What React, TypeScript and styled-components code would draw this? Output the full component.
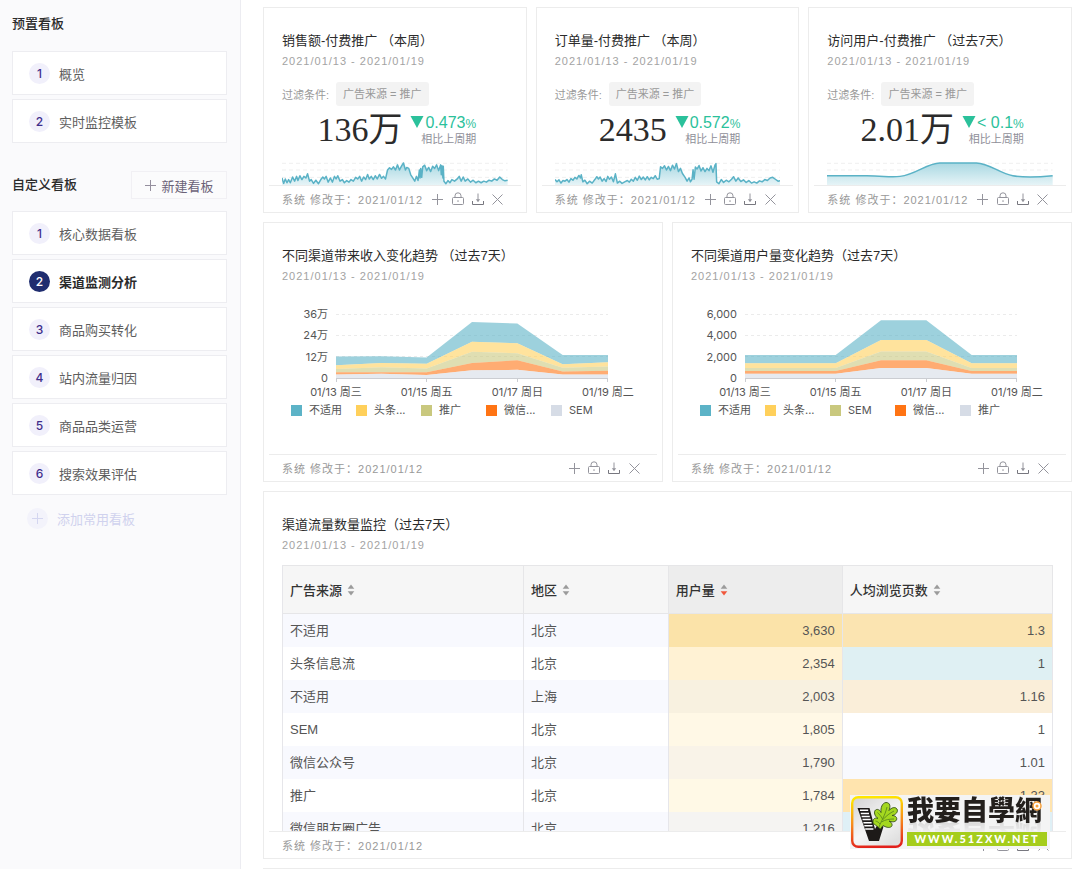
import React from "react";
import styled, { createGlobalStyle, css } from "styled-components";

const SANS = `"Liberation Sans", "Noto Sans CJK SC", sans-serif`;
const CHART = `Inter, "Noto Sans CJK SC", sans-serif`;

const GlobalStyle = createGlobalStyle`
  *, *::before, *::after { box-sizing: border-box; }
  body { margin: 0; background: #fff; color: #333; font-family: ${SANS}; font-size: 13px; }
  button { font: inherit; color: inherit; border: 0; background: none; padding: 0; cursor: pointer; }
  ul, ol { list-style: none; margin: 0; padding: 0; }
  h1, h2, h3, p { margin: 0; font-size: inherit; font-weight: inherit; }
`;

/* ---------- page ---------- */

const Page = styled.div`
  display: flex;
  height: 100vh;
`;

const Sidebar = styled.nav`
  flex: 0 0 241px;
  padding: 14px 13px 0 12px;
  background: #fafafc;
  border-right: 1px solid #ececf1;
`;

const Main = styled.main`
  flex: 1;
  min-width: 0;
  padding: 7px 8px 0 22px;
  overflow-y: auto;
  scrollbar-width: none;
  display: flex;
  flex-direction: column;
  gap: 9px;
`;

/* ---------- sidebar ---------- */

const SideHeading = styled.h2`
  line-height: 20px;
  font-weight: 500;
  color: #2b2b2b;
`;

const SideHeader = styled.div<{ $spaced?: boolean }>`
  display: flex;
  align-items: center;
  justify-content: space-between;
  margin: ${(p) => (p.$spaced ? "28px 0 12px" : "0 0 17px")};
`;

const NewButton = styled.button`
  display: flex;
  align-items: center;
  justify-content: center;
  gap: 4px;
  width: 96px;
  height: 28px;
  background: #fbfbfc;
  border: 1px solid #f1f0f4;
  color: #6b6278;
  svg { color: #958f9e; }
`;

const BoardList = styled.ol`
  display: grid;
  gap: 4px;
`;

const Bullet = styled.span<{ $active?: boolean; $faint?: boolean }>`
  display: flex;
  align-items: center;
  justify-content: center;
  width: 21px;
  height: 21px;
  border-radius: 50%;
  background: ${(p) => (p.$active ? "#1f2d6f" : p.$faint ? "#f3f3fb" : "#f1f0fb")};
  color: ${(p) => (p.$active ? "#fff" : p.$faint ? "#d4d6f0" : "#3f2d8c")};
  font-family: ${CHART};
  font-size: 12px;
  font-weight: 500;
`;

const BoardButton = styled.button<{ $active?: boolean }>`
  display: flex;
  align-items: center;
  gap: 9px;
  width: 100%;
  height: 44px;
  padding-left: 16px;
  background: #fff;
  border: 1px solid #ededf1;
  color: ${(p) => (p.$active ? "#2b2b2b" : "#5e5e5e")};
  font-weight: ${(p) => (p.$active ? 700 : 400)};
`;

const AddButton = styled.button`
  display: flex;
  align-items: center;
  gap: 9px;
  height: 44px;
  margin-top: 1px;
  padding-left: 15px;
  color: #d0d2ee;
`;

/* ---------- cards ---------- */

const Row = styled.div<{ $columns: number }>`
  flex: none;
  display: grid;
  grid-template-columns: repeat(${(p) => p.$columns}, minmax(0, 1fr));
  gap: 9px;
`;

const CardBox = styled.section<{ $height: number }>`
  display: flex;
  flex-direction: column;
  height: ${(p) => p.$height}px;
  border: 1px solid #ececec;
  background: #fff;
`;

const CardBody = styled.div`
  flex: 1;
  min-height: 0;
  overflow: hidden;
  display: flex;
  flex-direction: column;
  padding: 23px 18px 0;
`;

const CardTitle = styled.h3`
  line-height: 20px;
  font-weight: 400;
  color: #2b2b2b;
  white-space: nowrap;
`;

const DateRange = styled.p`
  line-height: 20px;
  font-size: 11px;
  letter-spacing: 1px;
  color: #a3a3a3;
  white-space: nowrap;
`;

const CardFooter = styled.footer`
  flex: none;
  display: flex;
  align-items: center;
  justify-content: space-between;
  height: 27px;
  margin: 0 5px;
  padding: 0 13px;
  border-top: 1px solid #ececec;
  font-size: 11px;
  letter-spacing: 1px;
  color: #999;
  white-space: nowrap;
`;

const Actions = styled.div`
  display: flex;
`;

const IconButton = styled.button`
  display: flex;
  align-items: center;
  justify-content: center;
  width: 20px;
  height: 20px;
  color: #94949c;
`;

/* ---------- metric card ---------- */

const FilterRow = styled.div`
  display: flex;
  align-items: center;
  gap: 7px;
  margin-top: 11px;
  font-size: 11px;
  color: #999;
  white-space: nowrap;
`;

const FilterTag = styled.span`
  height: 24px;
  padding: 0 7px;
  line-height: 24px;
  border-radius: 3px;
  background: #f3f3f3;
`;

const Metric = styled.div`
  display: flex;
  align-items: center;
  justify-content: center;
  gap: 8px;
  height: 48px;
  padding-left: 4px;
  white-space: nowrap;
`;

const MetricValue = styled.strong`
  font-family: "Liberation Serif", "Noto Sans CJK SC", serif;
  font-size: 34px;
  line-height: 48px;
  font-weight: 400;
  color: #2b2b2b;
`;

const Change = styled.div`
  display: flex;
  flex-direction: column;
  align-items: flex-end;
`;

const ChangeValue = styled.span`
  display: flex;
  align-items: baseline;
  gap: 1px;
  font-size: 16px;
  line-height: 16px;
  color: #2bc19b;
  small { font-size: 12px; }
`;

const ChangeNote = styled.span`
  font-size: 11px;
  line-height: 14px;
  color: #8f8f99;
`;

const SparkSvg = styled.svg`
  display: block;
  width: 100%;
  height: 24px;
  margin-top: 8px;
`;

/* ---------- area chart ---------- */

const ChartGrid = styled.div`
  display: grid;
  grid-template-columns: 46px 1fr;
  column-gap: 8px;
  margin-top: 28px;
  padding-right: 36px;
  font-family: ${CHART};
  font-size: 11px;
  color: #555;
`;

const YAxis = styled.ol`
  display: flex;
  flex-direction: column;
  justify-content: space-between;
  height: 78px;
  margin: -7px 0;
  text-align: right;
  line-height: 14px;
`;

const Plot = styled.svg`
  display: block;
  width: 100%;
  height: 68px;
`;

const XAxis = styled.ol`
  grid-column: 2;
  display: flex;
  justify-content: space-between;
  line-height: 20px;
  li {
    display: flex;
    justify-content: center;
    width: 0;
    white-space: nowrap;
  }
`;

const Legend = styled.ul`
  display: grid;
  grid-template-columns: repeat(5, 65px);
  padding-left: 9px;
  font-family: ${CHART};
  font-size: 11px;
  line-height: 16px;
  color: #555;
  white-space: nowrap;
  li { display: flex; align-items: center; gap: 7px; }
`;

const Swatch = styled.i<{ $color: string }>`
  width: 11px;
  height: 11px;
  background: ${(p) => p.$color};
`;

/* ---------- table ---------- */

const Table = styled.table`
  flex: none;
  width: 100%;
  margin-top: 10px;
  table-layout: fixed;
  border-collapse: separate;
  border-spacing: 0;
  border-left: 1px solid #e6e6ea;
  color: #555;
`;

const HeadCell = styled.th<{ $width: string; $sorted?: boolean }>`
  width: ${(p) => p.$width};
  height: 49px;
  padding: 0 8px 0 7px;
  text-align: left;
  font-weight: 500;
  color: #333;
  background: ${(p) => (p.$sorted ? "#ededed" : "#f6f6f6")};
  border: 1px solid #e6e6e8;
  border-left: 0;
`;

const SortButton = styled.button`
  display: flex;
  align-items: center;
  gap: 5px;
`;

const cell = css`
  height: 33px;
  padding: 0 7px;
  line-height: 20px;
  border-right: 1px solid #e6e6ea;
`;

const TextCell = styled.td`
  ${cell}
`;

const NumberCell = styled.td<{ $tint: string }>`
  ${cell}
  text-align: right;
  background: ${(p) => p.$tint};
`;

const BodyRow = styled.tr`
  &:nth-child(odd) { background: #f8f9fe; }
`;

/* ---------- site badge ---------- */

const Badge = styled.aside`
  position: fixed;
  right: 30px;
  bottom: 20px;
  display: flex;
  align-items: flex-start;
  gap: 4px;
  width: 200px;
  height: 54px;
  padding: 1px;
  background: #f4f4f4;
`;

const BadgeText = styled.div`
  display: flex;
  flex-direction: column;
  width: 140px;
`;

const BadgeName = styled.strong`
  height: 28px;
  margin-bottom: 8px;
  line-height: 26px;
  font-family: "Noto Sans CJK TC", sans-serif;
  font-size: 27px;
  font-weight: 900;
  color: #231f1c;
  white-space: nowrap;
  -webkit-box-reflect: below -4px linear-gradient(transparent 50%, rgba(0, 0, 0, 0.15));
`;

const BadgeUrl = styled.span`
  position: relative;
  height: 14px;
  line-height: 14px;
  text-align: center;
  background: #a5cd1c;
  color: #fff;
  font-family: Lato, sans-serif;
  font-size: 11px;
  font-weight: 900;
  letter-spacing: 2px;
`;

const BadgeMark = styled.svg`
  position: absolute;
  right: 8px;
  top: 6px;
`;

/* ---------- icons ---------- */

const PlusIcon = ({ size = 13 }: { size?: number }) => (
  <svg width={size} height={size} viewBox="0 0 13 13" fill="none" stroke="currentColor" aria-hidden>
    <path d="M6.5 1v11M1 6.5h11" />
  </svg>
);

const LockIcon = () => (
  <svg width="14" height="14" viewBox="0 0 14 14" fill="none" stroke="currentColor" aria-hidden>
    <rect x="1.500" y="5.500" width="11" height="7" rx="1" />
    <path d="M4 5.500V3.800a3 3 0 0 1 6 0V5.500M7 8.200v1.800" />
  </svg>
);

const DownloadIcon = () => (
  <svg width="14" height="14" viewBox="0 0 14 14" fill="none" stroke="currentColor" aria-hidden>
    <path d="M1.500 9v3.500h11V9" stroke="#77777f" />
    <path d="M7 1.500v8" />
    <path d="M4.800 7.200h4.400L7 10z" fill="currentColor" stroke="none" />
  </svg>
);

const CloseIcon = () => (
  <svg width="13" height="13" viewBox="0 0 13 13" fill="none" stroke="currentColor" aria-hidden>
    <path d="M1.500 1.500l10 10M11.500 1.500l-10 10" />
  </svg>
);

const SortIcon = ({ active }: { active?: boolean }) => (
  <svg width="8" height="12" viewBox="0 0 8 12" aria-hidden>
    <path d="M4 0.500L7.300 4.800H0.700z" fill="#9b9b9b" />
    <path d="M4 11.500L0.700 7.200h6.600z" fill={active ? "#f0573c" : "#9b9b9b"} />
  </svg>
);

const DownTriangle = () => (
  <svg width="14" height="12" viewBox="0 0 14 12" aria-hidden>
    <path d="M0.500 0h13L7 12z" fill="#2bc19b" />
  </svg>
);

const LogoIcon = () => (
  <svg width="52" height="52" viewBox="0 0 52 52" aria-hidden>
    <defs>
      <linearGradient id="logoEdge" x1="0.500" y1="0" x2="0.600" y2="1">
        <stop offset="0" stopColor="#ffe600" />
        <stop offset="0.500" stopColor="#f78a1c" />
        <stop offset="1" stopColor="#e2201c" />
      </linearGradient>
      <linearGradient id="logoFill" x1="0" y1="0" x2="0.700" y2="1">
        <stop offset="0" stopColor="#d2d2d2" />
        <stop offset="0.600" stopColor="#f6f6f6" />
        <stop offset="1" stopColor="#e0e0e0" />
      </linearGradient>
    </defs>
    <rect x="1.200" y="1.200" width="49.600" height="49.600" rx="6" fill="url(#logoFill)" stroke="url(#logoEdge)" strokeWidth="2.400" />
    <path d="M6.500 12h12l5.500 21 2.500-4.500 6 2L28 45H18z" fill="#1d1a18" />
    <path
      d="M9 14.300h8.200M9.800 17.400h8.200M10.600 20.500h8.200M11.500 23.600h8.200M12.400 26.700h8.200M13.300 29.800h8.200M14.200 32.900h8.200"
      stroke="#fff"
      strokeWidth="1.500"
    />
    <path
      d="M27 31C25.500 29 21.500 28.500 22 25C22.500 22 25 21.500 27 22.500C23.500 20 22.500 16 24.500 14C26.500 12.500 29 14 30 16.500C29.500 12 31 7 35 6.500C39.500 6.500 39.500 11 38 14.500C40.500 11.500 44 10.500 46 13C47.500 16 44.500 19 41 19.500C44.500 19.500 46.500 21.500 45.500 24C44 26.500 40.500 26 38 25C40.500 26.500 42 28.500 40.500 30.500C38 32.500 34.500 31 32 29.500L29.500 33Z"
      fill="#a4d81f"
      stroke="#35501a"
      strokeWidth="0.900"
    />
    <path
      d="M28 31C30 25 34 20 36 11M31.500 24C35 20 39 17 43 15M30.500 26C34 23.500 39 23 43 23M31.500 23C30 20 28 18 26.500 16.500M29 28C27.500 26 26 25.500 24.500 25"
      fill="none"
      stroke="#5c8a1c"
      strokeWidth="0.900"
    />
  </svg>
);

/* ---------- components ---------- */

const CardActions = () => (
  <Actions>
    <IconButton aria-label="添加"><PlusIcon /></IconButton>
    <IconButton aria-label="锁定"><LockIcon /></IconButton>
    <IconButton aria-label="下载"><DownloadIcon /></IconButton>
    <IconButton aria-label="关闭"><CloseIcon /></IconButton>
  </Actions>
);

type CardProps = { title: string; height: number; children?: React.ReactNode };

const Card = ({ title, height, children }: CardProps) => (
  <CardBox $height={height}>
    <CardBody>
      <CardTitle>{title}</CardTitle>
      <DateRange>2021/01/13 - 2021/01/19</DateRange>
      {children}
    </CardBody>
    <CardFooter>
      <span>系统 修改于：2021/01/12</span>
      <CardActions />
    </CardFooter>
  </CardBox>
);

// Sparkline traces live in a 680 x 72 box that is stretched over the card.
const SALES =
  "0,50 5,67 10,53 15,65 20,55 25,65 32,47 38,60 44,45 48,58 54,43 60,55 66,45 72,50 77,37 83,60 88,55 95,67 102,57 110,68 117,55 123,47 128,53 133,45 139,63 146,50 152,63 158,45 163,53 168,43 175,60 182,55 188,65 195,58 202,63 208,55 215,60 222,48 228,53 234,45 240,60 246,47 252,55 258,39 263,53 269,45 275,55 281,43 287,53 294,39 300,51 306,45 312,53 318,25 324,18 330,23 336,15 342,25 348,9 354,25 360,13 366,3 372,25 376,17 382,20 388,40 394,50 400,60 405,45 410,58 414,25 416,50 418,20 421,48 424,15 430,10 436,27 442,17 448,30 454,13 460,20 466,9 472,27 478,9 480,40 482,12 485,50 486,13 488,60 494,68 500,58 506,65 512,55 520,60 528,53 534,45 540,60 546,47 552,60 560,53 568,63 576,57 584,65 592,60 600,65 608,60 616,63 624,57 632,60 640,53 648,57 656,47 664,55 672,59 680,57";
const ORDERS =
  "0,55 6,62 12,56 18,66 24,58 30,60 36,55 42,63 48,52 54,57 60,48 66,53 72,42 77,50 79,40 84,62 90,57 97,68 104,60 112,66 120,55 126,46 131,53 136,47 142,60 148,52 154,61 159,45 164,54 170,47 176,62 182,37 188,66 195,60 202,67 210,62 218,58 224,63 230,54 236,60 242,48 248,57 254,44 260,55 266,47 272,56 278,46 284,56 290,48 296,52 302,43 308,54 314,52 318,15 324,20 330,12 336,25 342,14 348,27 354,10 360,22 366,5 372,30 378,20 384,36 392,48 398,60 404,50 408,62 413,54 416,24 419,54 423,16 428,22 434,11 440,28 446,18 452,30 458,20 464,27 470,12 476,32 482,10 485,5 487,62 494,68 501,55 508,64 516,57 524,62 532,54 538,46 545,60 552,50 560,61 568,56 576,64 584,58 592,66 600,62 608,66 616,59 624,62 632,55 640,58 648,50 656,48 664,54 672,60 680,58";
const VISITORS =
  "M0 43H120C170 43 190 49 220 45C270 38 300 4 340 3H450C490 4 520 36 560 43C600 50 640 47 680 43";

const Sparkline = ({ id, d }: { id: string; d: string }) => (
  <SparkSvg viewBox="0 0 680 72" preserveAspectRatio="none" aria-hidden>
    <defs>
      <linearGradient id={id} x1="0" y1="0" x2="0" y2="1">
        <stop offset="0" stopColor="#a9d8e2" />
        <stop offset="1" stopColor="#e6f4f7" />
      </linearGradient>
    </defs>
    {[4, 25, 48].map((y) => (
      <path key={y} d={`M0 ${y}H680`} stroke="#efefef" strokeDasharray="4 3" vectorEffect="non-scaling-stroke" />
    ))}
    <path d={`${d}V72H0Z`} fill={`url(#${id})`} />
    <path d={d} fill="none" stroke="#5ab2c6" strokeWidth="1.500" strokeLinejoin="round" vectorEffect="non-scaling-stroke" />
  </SparkSvg>
);

type MetricProps = { id: string; title: string; value: string; change: string; trace: string };

const MetricCard = ({ id, title, value, change, trace }: MetricProps) => (
  <Card title={title} height={206}>
    <FilterRow>
      <span>过滤条件:</span>
      <FilterTag>广告来源 = 推广</FilterTag>
    </FilterRow>
    <Metric>
      <MetricValue>{value}</MetricValue>
      <Change>
        <ChangeValue>
          <DownTriangle />
          <span>{change}<small>%</small></span>
        </ChangeValue>
        <ChangeNote>相比上周期</ChangeNote>
      </Change>
    </Metric>
    <Sparkline id={id} d={trace} />
  </Card>
);

const COLORS = ["#5cb3c7", "#ffd05b", "#c9c87e", "#ff7414", "#d6dce6"];
const DAYS = ["01/13 周三", "01/15 周五", "01/17 周日", "01/19 周二"];

type AreaProps = { title: string; ticks: string[]; max: number; legend: string[]; levels: number[][] };

// levels holds the cumulative top edge of each band, from the top band down.
const AreaCard = ({ title, ticks, max, legend, levels }: AreaProps) => {
  const width = 272;
  const height = 64;
  const point = (v: number, i: number) => `${(i * width) / 6},${height - (v / max) * height}`;
  return (
    <Card title={title} height={260}>
      <ChartGrid>
        <YAxis>{ticks.map((t) => <li key={t}>{t}</li>)}</YAxis>
        <Plot viewBox="0 0 272 68" preserveAspectRatio="none" aria-hidden>
          {[0.5, 21.5, 42.5].map((y) => (
            <path key={y} d={`M0 ${y}H272`} stroke="#ebebeb" strokeDasharray="3 3" vectorEffect="non-scaling-stroke" />
          ))}
          {levels.map((level, n) => {
            const floor = levels[n + 1] ?? level.map(() => 0);
            const edge = [...level.map(point), ...floor.map((v, i) => point(v, i)).reverse()];
            return <polygon key={n} points={edge.join(" ")} fill={COLORS[n]} fillOpacity="0.600" />;
          })}
          <path
            d="M0 64.500H272M0.500 64v4M90.500 64v4M181.500 64v4M271.500 64v4"
            stroke="#cbcdd2"
            fill="none"
            vectorEffect="non-scaling-stroke"
          />
        </Plot>
        <XAxis>{DAYS.map((d) => <li key={d}>{d}</li>)}</XAxis>
      </ChartGrid>
      <Legend>
        {legend.map((name, n) => (
          <li key={name}><Swatch $color={COLORS[n]} />{name}</li>
        ))}
      </Legend>
    </Card>
  );
};

const COLUMNS = [
  { name: "广告来源", width: "31.300%" },
  { name: "地区", width: "18.800%" },
  { name: "用户量", width: "22.600%", sorted: true },
  { name: "人均浏览页数", width: "27.300%" },
];

const ROWS: [string, string, string, string, string, string][] = [
  ["不适用", "北京", "3,630", "#fbe3a9", "1.3", "#fbe4b1"],
  ["头条信息流", "北京", "2,354", "#fff2d4", "1", "#dff0f3"],
  ["不适用", "上海", "2,003", "#f8f1e0", "1.16", "#faeed9"],
  ["SEM", "北京", "1,805", "#fff8e6", "1", "#ffffff"],
  ["微信公众号", "北京", "1,790", "#f9f3e8", "1.01", "#f8f9fe"],
  ["推广", "北京", "1,784", "#fff9e6", "1.33", "#ffe4ae"],
  ["微信朋友圈广告", "北京", "1,216", "#f5f4f2", "1", "#dff0f6"],
];

const DataTable = () => (
  <Table>
    <thead>
      <tr>
        {COLUMNS.map((c) => (
          <HeadCell key={c.name} $width={c.width} $sorted={c.sorted}>
            <SortButton>{c.name}<SortIcon active={c.sorted} /></SortButton>
          </HeadCell>
        ))}
      </tr>
    </thead>
    <tbody>
      {ROWS.map(([source, region, users, userTint, pages, pageTint], i) => (
        <BodyRow key={i}>
          <TextCell>{source}</TextCell>
          <TextCell>{region}</TextCell>
          <NumberCell $tint={userTint}>{users}</NumberCell>
          <NumberCell $tint={pageTint}>{pages}</NumberCell>
        </BodyRow>
      ))}
    </tbody>
  </Table>
);

const PRESETS = ["概览", "实时监控模板"];
const CUSTOM = ["核心数据看板", "渠道监测分析", "商品购买转化", "站内流量归因", "商品品类运营", "搜索效果评估"];

const Boards = ({ names, active }: { names: string[]; active?: string }) => (
  <BoardList>
    {names.map((name, i) => (
      <li key={name}>
        <BoardButton $active={name === active}>
          <Bullet $active={name === active}>{i + 1}</Bullet>
          {name}
        </BoardButton>
      </li>
    ))}
  </BoardList>
);

export default function App() {
  return (
    <>
      <GlobalStyle />
      <Page>
        <Sidebar>
          <SideHeader><SideHeading>预置看板</SideHeading></SideHeader>
          <Boards names={PRESETS} />
          <SideHeader $spaced>
            <SideHeading>自定义看板</SideHeading>
            <NewButton><PlusIcon />新建看板</NewButton>
          </SideHeader>
          <Boards names={CUSTOM} active="渠道监测分析" />
          <AddButton>
            <Bullet $faint><PlusIcon /></Bullet>
            添加常用看板
          </AddButton>
        </Sidebar>
        <Main>
          <Row $columns={3}>
            <MetricCard id="sales" title="销售额-付费推广 （本周）" value="136万" change="0.473" trace={`M${SALES}`} />
            <MetricCard id="orders" title="订单量-付费推广 （本周）" value="2435" change="0.572" trace={`M${ORDERS}`} />
            <MetricCard id="visitors" title="访问用户-付费推广 （过去7天）" value="2.01万" change="< 0.1" trace={VISITORS} />
          </Row>
          <Row $columns={2}>
            <AreaCard
              title="不同渠道带来收入变化趋势 （过去7天）"
              ticks={["36万", "24万", "12万", "0"]}
              max={36}
              legend={["不适用", "头条...", "推广", "微信...", "SEM"]}
              levels={[
                [12.1, 12.2, 11.5, 31.5, 30.6, 13, 13],
                [7.2, 8.5, 8, 20.4, 19.5, 7.8, 8.9],
                [5, 6.1, 5.4, 14.7, 13.9, 5.8, 6.5],
                [3.3, 3.3, 3.2, 8.4, 10, 3.7, 4.1],
                [1.9, 2.4, 1.7, 4.3, 4.6, 2, 1.9],
              ]}
            />
            <AreaCard
              title="不同渠道用户量变化趋势（过去7天）"
              ticks={["6,000", "4,000", "2,000", "0"]}
              max={6000}
              legend={["不适用", "头条...", "SEM", "微信...", "推广"]}
              levels={[
                [2165, 2165, 2150, 5410, 5410, 2165, 2165],
                [1390, 1390, 1390, 3556, 3556, 1390, 1390],
                [930, 930, 930, 2474, 2474, 930, 930],
                [650, 650, 650, 1670, 1670, 650, 650],
                [400, 400, 400, 930, 930, 400, 400],
              ]}
            />
          </Row>
          <Row $columns={1}>
            <Card title="渠道流量数量监控（过去7天）" height={368}>
              <DataTable />
            </Card>
          </Row>
          <Row $columns={1}>
            <CardBox $height={260} />
          </Row>
        </Main>
      </Page>
      <Badge>
        <LogoIcon />
        <BadgeText>
          <BadgeName>我要自學網</BadgeName>
          <BadgeUrl>WWW.51ZXW.NET</BadgeUrl>
        </BadgeText>
        <BadgeMark width="10" height="10" viewBox="0 0 10 10" aria-hidden>
          <circle cx="5" cy="5" r="4" fill="#fff" stroke="#f7a13c" strokeWidth="1.500" />
          <circle cx="5" cy="5" r="1.500" fill="#f7a13c" />
        </BadgeMark>
      </Badge>
    </>
  );
}
